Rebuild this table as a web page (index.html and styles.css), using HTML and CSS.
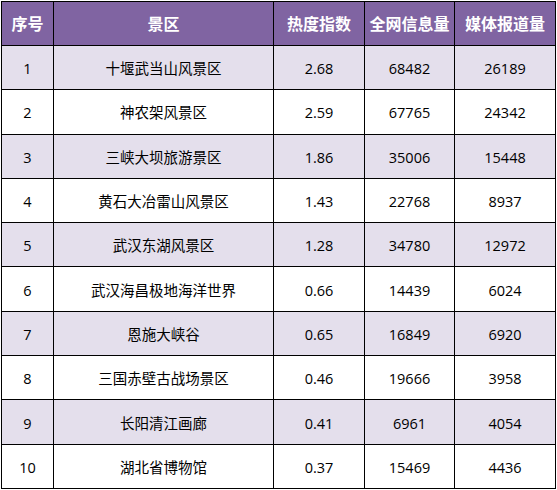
FILE: index.html
```html
<!DOCTYPE html>
<html>
<head>
  <meta charset="utf-8">
  <link rel="stylesheet" href="styles.css">
</head>
<body>
  <table class="rank">
    <colgroup>
      <col class="c-no">
      <col class="c-name">
      <col class="c-heat">
      <col class="c-net">
      <col class="c-media">
    </colgroup>
    <thead>
      <tr>
        <th>序号</th>
        <th>景区</th>
        <th>热度指数</th>
        <th>全网信息量</th>
        <th>媒体报道量</th>
      </tr>
    </thead>
    <tbody>
      <tr><td>1</td><td>十堰武当山风景区</td><td>2.68</td><td>68482</td><td>26189</td></tr>
      <tr><td>2</td><td>神农架风景区</td><td>2.59</td><td>67765</td><td>24342</td></tr>
      <tr><td>3</td><td>三峡大坝旅游景区</td><td>1.86</td><td>35006</td><td>15448</td></tr>
      <tr><td>4</td><td>黄石大冶雷山风景区</td><td>1.43</td><td>22768</td><td>8937</td></tr>
      <tr><td>5</td><td>武汉东湖风景区</td><td>1.28</td><td>34780</td><td>12972</td></tr>
      <tr><td>6</td><td>武汉海昌极地海洋世界</td><td>0.66</td><td>14439</td><td>6024</td></tr>
      <tr><td>7</td><td>恩施大峡谷</td><td>0.65</td><td>16849</td><td>6920</td></tr>
      <tr><td>8</td><td>三国赤壁古战场景区</td><td>0.46</td><td>19666</td><td>3958</td></tr>
      <tr><td>9</td><td>长阳清江画廊</td><td>0.41</td><td>6961</td><td>4054</td></tr>
      <tr><td>10</td><td>湖北省博物馆</td><td>0.37</td><td>15469</td><td>4436</td></tr>
    </tbody>
  </table>
</body>
</html>
```

FILE: styles.css
```css
body {
  margin: 0;
  padding: 1px 0 0 1px;
  background: #fff;
  font-family: "Open Sans", "Noto Sans CJK SC", sans-serif;
}

.rank {
  border-collapse: collapse;
  table-layout: fixed;
  width: 555px;
  color: #000;
}

.c-no { width: 52px; }
.c-name { width: 220px; }
.c-heat { width: 91px; }
.c-net { width: 90px; }
.c-media { width: 101px; }

.rank th,
.rank td {
  border: 1px solid #000;
  text-align: center;
  padding: 0;
  line-height: 20px;
}

.rank thead tr {
  height: 44px;
}

.rank tbody tr {
  height: 44.3px;
}

.rank th {
  background: #8064a2;
  color: #fff;
  font-size: 16px;
  font-weight: bold;
}

.rank td {
  padding-top: 3px;
  font-size: 14.5px;
}

.rank tbody tr:nth-child(odd) td {
  background: #e4dfec;
}
```
